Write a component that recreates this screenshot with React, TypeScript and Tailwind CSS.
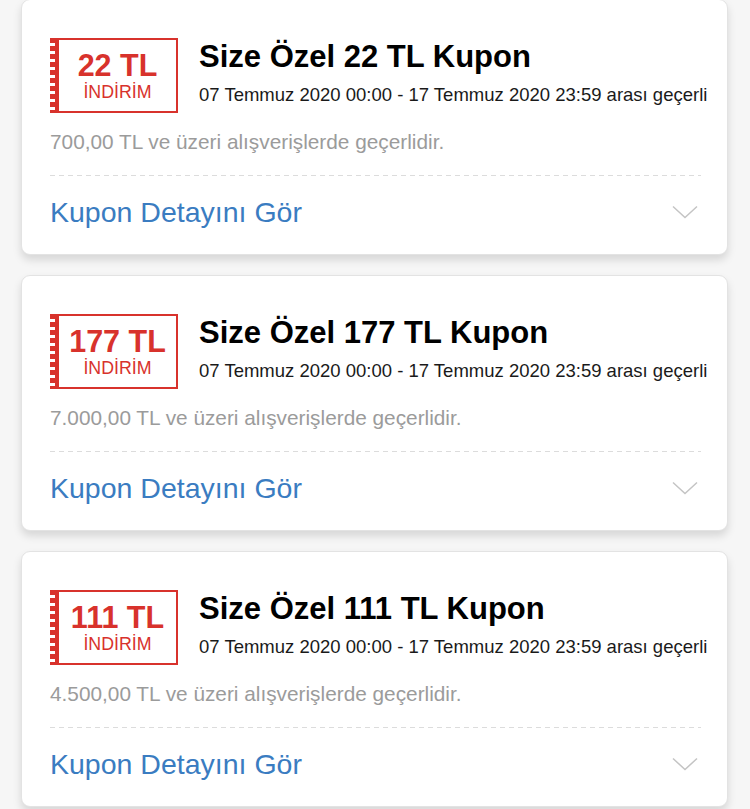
import React from 'react';

type Coupon = {
    amount: string;
    limit: string;
};

const coupons: Coupon[] = [
    { amount: '22', limit: '700,00' },
    { amount: '177', limit: '7.000,00' },
    { amount: '111', limit: '4.500,00' },
];

const Badge = ({ amount }: { amount: string }) => (
    <div className="flex h-[75px] w-[128px] shrink-0">
        <div className="flex w-[9px] bg-[#d8322c]">
            <div className="h-full w-[5px] bg-[repeating-linear-gradient(to_bottom,transparent_0,transparent_5px,#ffffff_5px,#ffffff_8px)]" />
        </div>
        <div className="flex flex-1 flex-col items-center justify-center border-y-2 border-r-2 border-[#d8322c] text-[#d8322c]">
            <span className="text-[30.5px] font-bold leading-[33px]">{amount} TL</span>
            <span className="text-[17.8px] leading-[20px]">İNDİRİM</span>
        </div>
    </div>
);

const Chevron = () => (
    <svg width="26" height="14" viewBox="0 0 26 14" fill="none">
        <path d="M1 1.5 L13 12.5 L25 1.5" stroke="#c4c4c4" strokeWidth="1.5" />
    </svg>
);

const CouponCard = ({ coupon }: { coupon: Coupon }) => (
    <div className="h-[256px] rounded-[9px] border border-[#e3e3e3] bg-white px-[28px] pt-[38px] shadow-[0_5px_9px_rgba(0,0,0,0.13)]">
        <div className="flex items-start gap-[21px]">
            <Badge amount={coupon.amount} />
            <div className="flex flex-col pt-[1px]">
                <span className="whitespace-nowrap text-[31px] font-bold leading-[36px] text-black">Size Özel {coupon.amount} TL Kupon</span>
                <span className="mt-[10px] whitespace-nowrap text-[18.5px] leading-[20px] text-[#1a1a1a]">
                    07 Temmuz 2020 00:00 - 17 Temmuz 2020 23:59 arası geçerli
                </span>
            </div>
        </div>
        <div className="mt-[17px] text-[20.8px] leading-[24px] text-[#9b9b9b]">
            {coupon.limit} TL ve üzeri alışverişlerde geçerlidir.
        </div>
        <div className="mt-[21px] mr-[-2px] h-px bg-[linear-gradient(to_right,#dcdcdc_5px,transparent_5px)] bg-[length:9px_1px]" />
        <div className="mt-[19px] flex items-center justify-between pr-[1px]">
            <span className="text-[28.5px] leading-[34px] text-[#3a7cc1]">Kupon Detayını Gör</span>
            <Chevron />
        </div>
    </div>
);

export default function App() {
    return (
        <div className="min-h-screen overflow-hidden bg-[#f6f6f6] font-['Liberation_Sans',Arial,sans-serif]">
            <div className="-mt-px flex flex-col gap-[20px] px-[21px] pr-[22px]">
                {coupons.map((c) => (
                    <CouponCard key={c.amount} coupon={c} />
                ))}
            </div>
        </div>
    );
}
